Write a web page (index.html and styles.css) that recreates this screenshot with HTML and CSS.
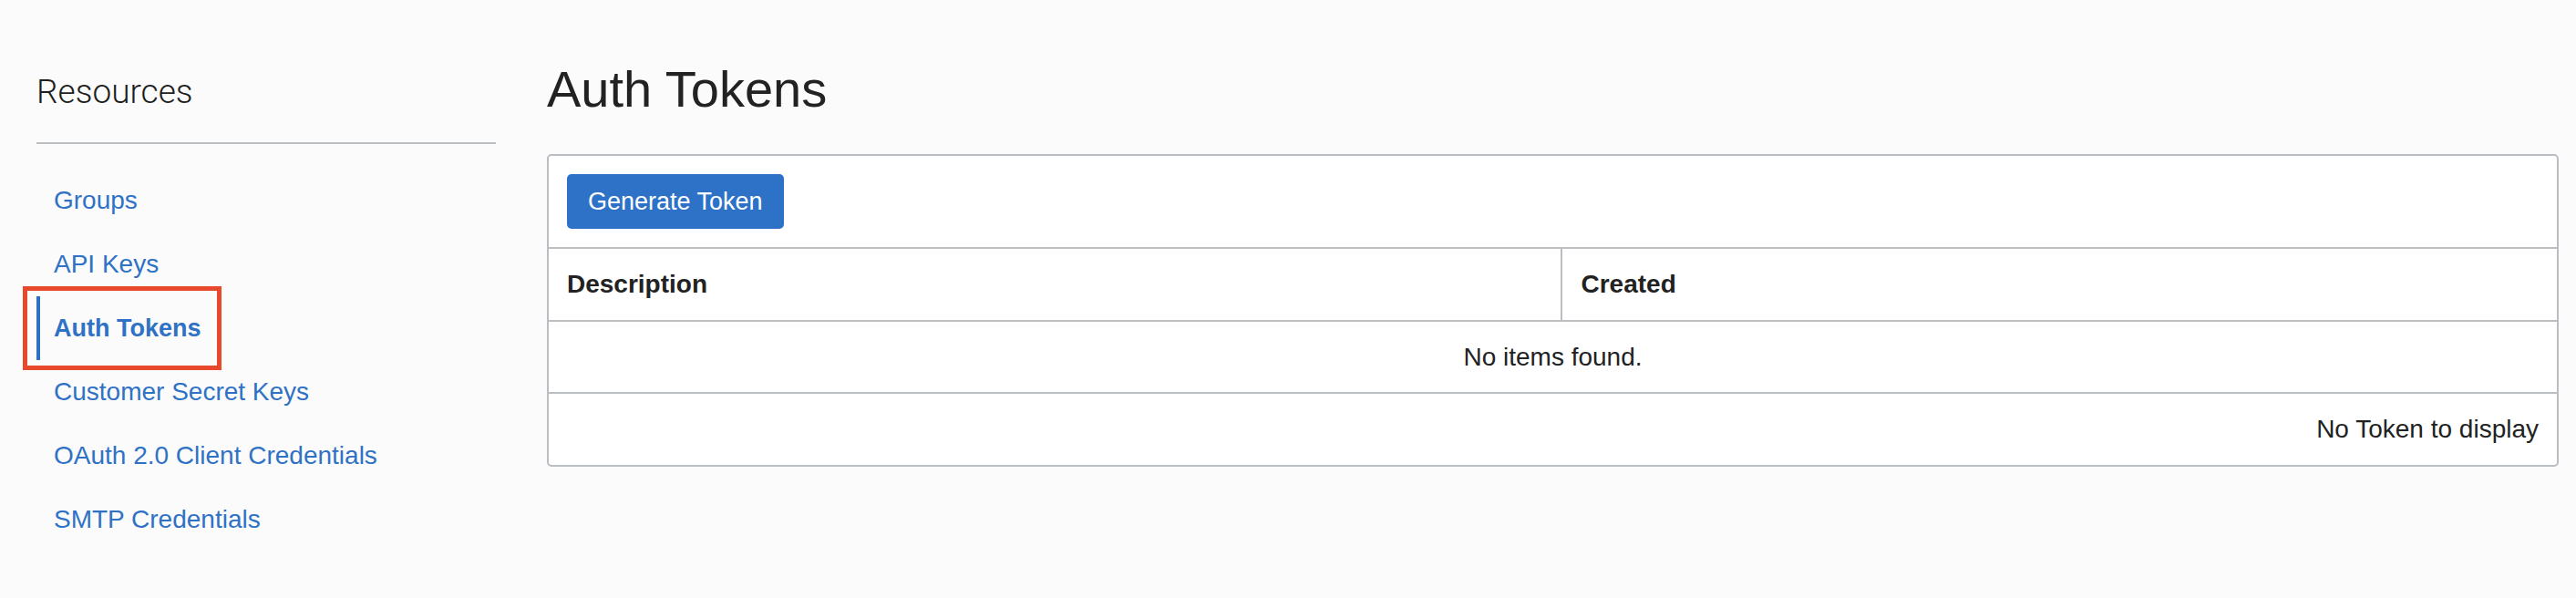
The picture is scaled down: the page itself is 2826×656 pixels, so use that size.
FILE: index.html
```html
<!DOCTYPE html>
<html lang="en">
<head>
<meta charset="utf-8">
<title>Auth Tokens</title>
<link rel="stylesheet" href="styles.css">
</head>
<body>
<div class="page">
  <aside class="sidebar">
    <h2 class="side-title">Resources</h2>
    <nav class="side-nav">
      <a class="nav-item" href="#">Groups</a>
      <a class="nav-item" href="#">API Keys</a>
      <a class="nav-item active" href="#">Auth Tokens<span class="callout"></span></a>
      <a class="nav-item" href="#">Customer Secret Keys</a>
      <a class="nav-item" href="#">OAuth 2.0 Client Credentials</a>
      <a class="nav-item" href="#">SMTP Credentials</a>
    </nav>
  </aside>
  <main class="main">
    <h1 class="title">Auth Tokens</h1>
    <section class="panel">
      <div class="toolbar">
        <button class="btn" type="button">Generate Token</button>
      </div>
      <div class="grid">
        <div class="th">Description</div>
        <div class="th th-last">Created</div>
        <div class="empty">No items found.</div>
        <div class="footer">No Token to display</div>
      </div>
    </section>
  </main>
</div>
</body>
</html>
```

FILE: styles.css
```css
html, body {
  margin: 0;
  padding: 0;
  background: #fbfbfb;
}

body {
  font-family: "Liberation Sans", Arial, Helvetica, sans-serif;
  color: #222222;
}

.page {
  display: flex;
  gap: 56px;
  padding: 0 19px 0 40px;
}

.sidebar {
  width: 504px;
  flex: none;
  padding-top: 79px;
}

.side-title {
  margin: 0;
  font-family: Roboto, "Liberation Sans", sans-serif;
  font-weight: 300;
  font-size: 37px;
  line-height: 44px;
  color: #1e1e1e;
  padding-bottom: 33px;
  border-bottom: 2px solid #babec3;
}

.side-nav {
  display: flex;
  flex-direction: column;
  margin-top: 27px;
}

.nav-item {
  position: relative;
  display: block;
  height: 70px;
  line-height: 70px;
  padding-left: 19px;
  font-size: 28px;
  color: #2f72c5;
  text-decoration: none;
  white-space: nowrap;
}

.nav-item.active {
  font-weight: bold;
  font-size: 27px;
  border-left: 4px solid #2f6fc3;
  padding-left: 15px;
}

.callout {
  position: absolute;
  left: -19px;
  top: -11px;
  width: 208px;
  height: 82px;
  border: 5px solid #e8482c;
  pointer-events: none;
}

.main {
  flex: 1;
  min-width: 0;
  padding-top: 66px;
}

.title {
  margin: 0 0 39px;
  font-size: 56px;
  font-weight: normal;
  line-height: 64px;
  color: #222222;
}

.panel {
  background: #ffffff;
  border: 2px solid #babec3;
  border-radius: 5px;
  overflow: hidden;
}

.toolbar {
  padding: 20px;
  border-bottom: 2px solid #babec3;
}

.btn {
  display: block;
  height: 60px;
  padding: 0 23px;
  border: none;
  border-radius: 5px;
  background: #2d72c7;
  color: #ffffff;
  font-family: "Liberation Sans", Arial, sans-serif;
  font-size: 27px;
  cursor: pointer;
}

.grid {
  display: grid;
  grid-template-columns: 1113fr 1091fr;
}

.th {
  height: 78px;
  line-height: 78px;
  padding: 0 20px;
  font-weight: bold;
  font-size: 28px;
  border-bottom: 2px solid #babec3;
  border-right: 2px solid #babec3;
}

.th-last {
  border-right: none;
}

.empty {
  grid-column: 1 / -1;
  height: 77px;
  line-height: 77px;
  text-align: center;
  font-size: 28px;
  border-bottom: 2px solid #babec3;
}

.footer {
  grid-column: 1 / -1;
  height: 78px;
  line-height: 78px;
  padding: 0 20px;
  text-align: right;
  font-size: 28px;
}
```
